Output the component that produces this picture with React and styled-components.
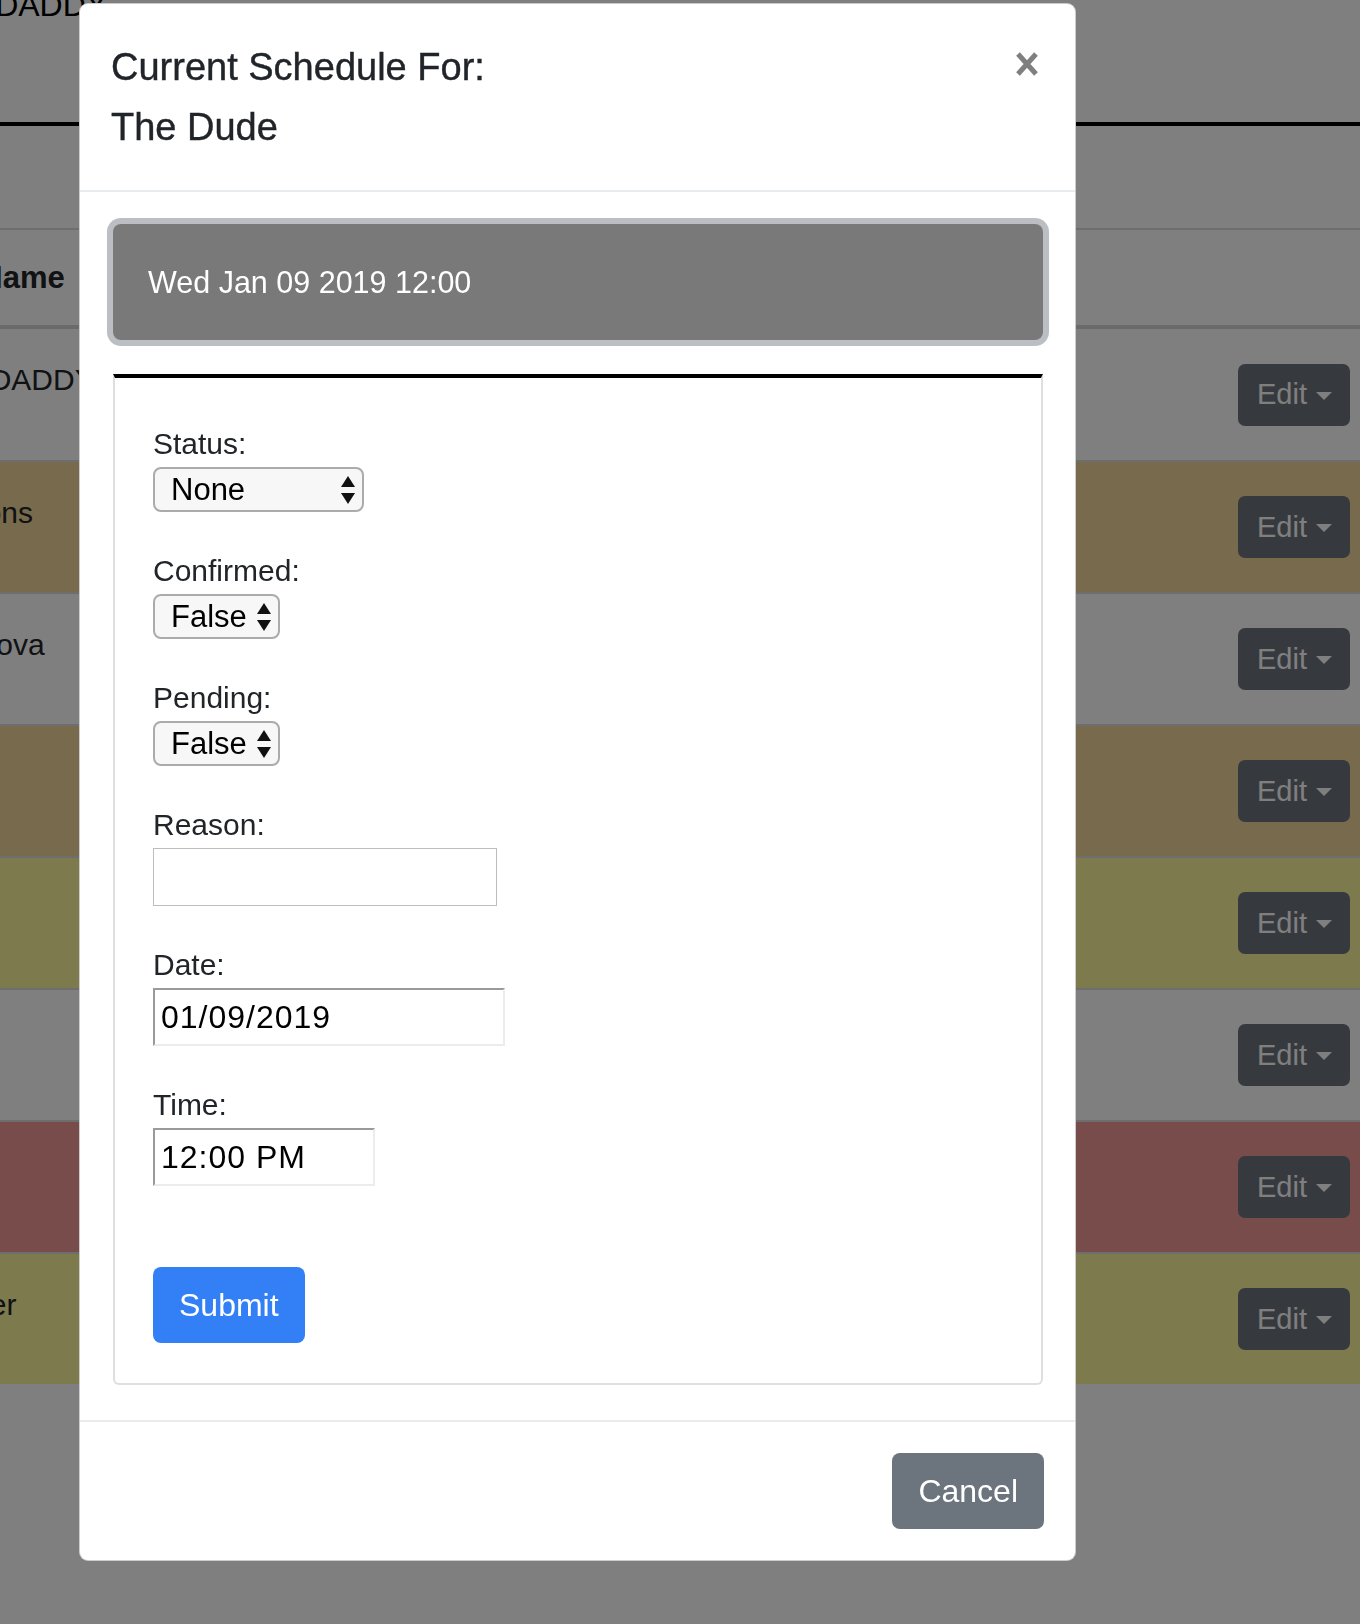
import styled, { createGlobalStyle } from "styled-components"

const GlobalStyle = createGlobalStyle`
  html, body {
    margin: 0;
    padding: 0;
    background: #fff;
    overflow: hidden;
  }
  body {
    font-family: "Liberation Sans", Arial, sans-serif;
    color: #212529;
  }
  * {
    box-sizing: border-box;
  }
`

const players = [
  { name: "KING DADDY", tone: "plain" },
  { name: "Simmons", tone: "warning" },
  { name: "Abramova", tone: "plain" },
  { name: "Smith", tone: "warning" },
  { name: "Diaz", tone: "caution" },
  { name: "Brown", tone: "plain" },
  { name: "Lee", tone: "danger" },
  { name: "Fletcher", tone: "caution" },
]

const tones = {
  plain: "#ffffff",
  warning: "#f0d498",
  caution: "#faf49c",
  danger: "#ee9894",
}

const Arrows = () => (
  <svg width="14" height="28" viewBox="0 0 14 28">
    <polygon points="0,11 7,0 14,11" fill="#111" />
    <polygon points="0,17 14,17 7,28" fill="#111" />
  </svg>
)

const CloseIcon = () => (
  <svg width="26" height="24" viewBox="0 0 26 24">
    <path d="M4 2 L22 22 M22 2 L4 22" stroke="#7f7f7f" strokeWidth="5" />
  </svg>
)

const Picker = ({ width, value, options }) => (
  <SelectWrap width={width}>
    <Select defaultValue={value}>
      {options.map((o) => (
        <option key={o}>{o}</option>
      ))}
    </Select>
    <ArrowSlot>
      <Arrows />
    </ArrowSlot>
  </SelectWrap>
)

export default function App() {
  return (
    <>
      <GlobalStyle />
      <Page>
        <Banner>KING DADDY</Banner>
        <TableHead>
          <HeadCell>Last Name</HeadCell>
        </TableHead>
        {players.map((p) => (
          <Row key={p.name} tone={p.tone}>
            <NameCell>{p.name}</NameCell>
            <EditButton>
              Edit
              <Caret />
            </EditButton>
          </Row>
        ))}
      </Page>
      <Backdrop />
      <ModalLayer>
        <Dialog>
          <Header>
            <Title>
              Current Schedule For:
              <br />
              The Dude
            </Title>
            <Close aria-label="Close">
              <CloseIcon />
            </Close>
          </Header>
          <Body>
            <DateBanner>Wed Jan 09 2019 12:00</DateBanner>
            <Card>
              <Field>
                <Label>Status:</Label>
                <Picker width={211} value="None" options={["None", "Cancelled", "Rescheduled"]} />
              </Field>
              <Field>
                <Label>Confirmed:</Label>
                <Picker width={127} value="False" options={["False", "True"]} />
              </Field>
              <Field>
                <Label>Pending:</Label>
                <Picker width={127} value="False" options={["False", "True"]} />
              </Field>
              <Field>
                <Label>Reason:</Label>
                <TextInput type="text" />
              </Field>
              <Field>
                <Label>Date:</Label>
                <InsetInput type="text" width={352} defaultValue="01/09/2019" />
              </Field>
              <Field>
                <Label>Time:</Label>
                <InsetInput type="text" width={222} defaultValue="12:00 PM" />
              </Field>
              <SubmitButton>Submit</SubmitButton>
            </Card>
          </Body>
          <Footer>
            <CancelButton>Cancel</CancelButton>
          </Footer>
        </Dialog>
      </ModalLayer>
    </>
  )
}

const Page = styled.div`
  margin-left: -92px;
  width: calc(100% + 92px);
  font-size: 30px;
`

const Banner = styled.h1`
  margin: -15px 0 0;
  height: 141px;
  padding: 0;
  font-size: 32px;
  font-weight: 400;
  line-height: 40px;
  color: #000;
  border-bottom: 4px solid #000;
`

const TableHead = styled.div`
  margin-top: 102px;
  height: 101px;
  display: flex;
  align-items: center;
  border-top: 2px solid #dcdcdc;
  border-bottom: 4px solid #d6d6d6;
`

const HeadCell = styled.div`
  font-weight: 700;
  font-size: 31px;
  color: #212529;
`

const Row = styled.div`
  height: 132px;
  display: flex;
  justify-content: space-between;
  align-items: flex-start;
  padding: 28px 10px 0 0;
  background: ${({ tone }) => tones[tone]};
  border-top: 2px solid #dcdcdc;

  &:nth-of-type(2) {
    border-top: 0;
    height: 131px;
  }
`

const NameCell = styled.div`
  font-size: 30px;
  line-height: 45px;
  color: #212529;
  white-space: nowrap;
`

const EditButton = styled.button`
  align-self: center;
  margin-top: -28px;
  height: 62px;
  padding: 0 18px 0 19px;
  display: flex;
  align-items: center;
  gap: 9px;
  border: 0;
  border-radius: 7px;
  background: #6c757d;
  color: #fff;
  font-family: "Liberation Sans", Arial, sans-serif;
  font-size: 29px;
`

const Caret = styled.span`
  width: 0;
  height: 0;
  border-top: 8px solid #fff;
  border-left: 8px solid transparent;
  border-right: 8px solid transparent;
  margin-top: 2px;
`

const Backdrop = styled.div`
  position: fixed;
  inset: 0;
  background: rgba(0, 0, 0, 0.5);
  z-index: 1;
`

const ModalLayer = styled.div`
  position: fixed;
  inset: 0;
  z-index: 2;
  overflow: hidden;
`

const Dialog = styled.div`
  margin: 3px 0 0 79px;
  width: 997px;
  background: #fff;
  border: 1px solid rgba(0, 0, 0, 0.2);
  border-radius: 9px;
  display: flex;
  flex-direction: column;
`

const Header = styled.div`
  display: flex;
  justify-content: space-between;
  align-items: flex-start;
  padding: 33px 35px 33px 31px;
  border-bottom: 2px solid #e9ecef;
`

const Title = styled.h5`
  margin: 0;
  font-size: 38px;
  line-height: 60px;
  font-weight: 500;
  color: #212529;
  -webkit-text-stroke: 0.4px #212529;
`

const Close = styled.button`
  margin-top: 15px;
  padding: 0;
  border: 0;
  background: none;
  display: flex;
`

const Body = styled.div`
  padding: 32px 32px 35px 33px;
`

const DateBanner = styled.div`
  height: 116px;
  display: flex;
  align-items: center;
  padding-left: 35px;
  background: #797979;
  color: #fff;
  font-size: 30.5px;
  border-radius: 8px;
  box-shadow: 0 0 0 6px #bbbec2;
`

const Card = styled.div`
  margin-top: 34px;
  padding: 48px 0 40px 38px;
  border: 2px solid #dfdfdf;
  border-top: 4px solid #000;
  border-radius: 0 0 6px 6px;
`

const Field = styled.div`
  margin-bottom: 41px;
`

const Label = styled.label`
  display: block;
  font-size: 30px;
  line-height: 36px;
  margin-bottom: 5px;
  color: #212529;
`

const SelectWrap = styled.div`
  position: relative;
  margin-top: 3px;
  width: ${({ width }) => width}px;
  height: 45px;
  border: 2px solid #ababab;
  border-radius: 8px;
  background: #f7f7f7;
`

const Select = styled.select`
  appearance: none;
  width: 100%;
  height: 100%;
  border: 0;
  background: transparent;
  padding: 0 0 0 16px;
  font-family: "Liberation Sans", Arial, sans-serif;
  font-size: 31px;
  color: #000;
  outline: none;
`

const ArrowSlot = styled.span`
  position: absolute;
  right: 7px;
  top: 7px;
  display: flex;
  pointer-events: none;
`

const TextInput = styled.input`
  display: block;
  width: 344px;
  height: 58px;
  border: 1px solid #bdbdbd;
  border-radius: 0;
  padding: 0 8px;
  font-family: "Liberation Sans", Arial, sans-serif;
  font-size: 31px;
  outline: none;
`

const InsetInput = styled.input`
  display: block;
  width: ${({ width }) => width}px;
  height: 58px;
  border: 2px solid;
  border-color: #9a9a9a #ececec #ececec #9a9a9a;
  border-radius: 0;
  padding: 0 6px;
  font-family: "Liberation Sans", Arial, sans-serif;
  font-size: 32px;
  letter-spacing: 1px;
  color: #000;
  outline: none;
`

const BaseButton = styled.button`
  height: 76px;
  padding: 0 26px;
  border: 0;
  border-radius: 8px;
  color: #fff;
  font-family: "Liberation Sans", Arial, sans-serif;
  font-size: 32px;
`

const SubmitButton = styled(BaseButton)`
  margin-top: 40px;
  background: #3380f6;
`

const Footer = styled.div`
  display: flex;
  justify-content: flex-end;
  padding: 31px 31px 31px;
  border-top: 2px solid #e9ecef;
`

const CancelButton = styled(BaseButton)`
  background: #6c757d;
`
